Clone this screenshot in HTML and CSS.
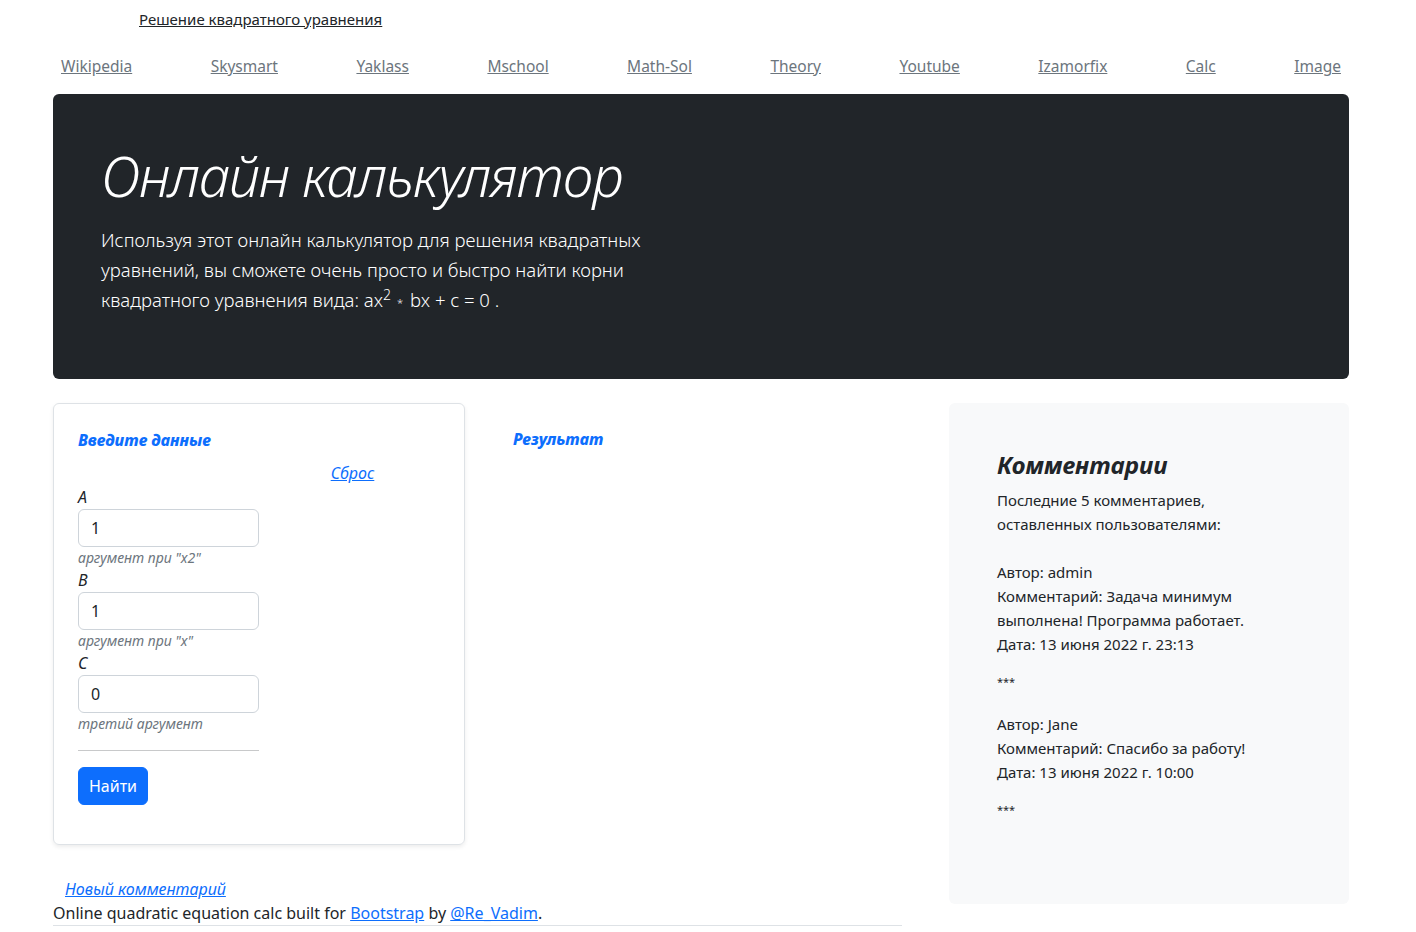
FILE: index.html
```html
<!DOCTYPE html>
<html lang="ru">
<head>
<meta charset="utf-8">
<title>Решение квадратного уравнения</title>
<link rel="stylesheet" href="styles.css">
</head>
<body>
<div class="page">
  <header class="top">
    <a class="brand" href="#">Решение квадратного уравнения</a>
  </header>
  <nav class="links">
    <a href="#">Wikipedia</a>
    <a href="#">Skysmart</a>
    <a href="#">Yaklass</a>
    <a href="#">Mschool</a>
    <a href="#">Math-Sol</a>
    <a href="#">Theory</a>
    <a href="#">Youtube</a>
    <a href="#">Izamorfix</a>
    <a href="#">Calc</a>
    <a href="#">Image</a>
  </nav>
  <section class="hero">
    <h1 class="hero-title">Онлайн калькулятор</h1>
    <p class="hero-lead">Используя этот онлайн калькулятор для решения квадратных уравнений, вы сможете очень просто и быстро найти корни квадратного уравнения вида: ax<sup>2</sup><span class="small-op">*</span>bx + c = 0 .</p>
  </section>
  <div class="main">
    <div class="left">
      <div class="cols">
        <div class="card">
          <h6 class="section-title">Введите данные</h6>
          <div class="reset-row"><span></span><a class="reset" href="#">Сброс</a></div>
          <div class="field">
            <label class="lbl">A</label>
            <div class="input">1</div>
            <div class="help">аргумент при "x2"</div>
          </div>
          <div class="field">
            <label class="lbl">B</label>
            <div class="input">1</div>
            <div class="help">аргумент при "x"</div>
          </div>
          <div class="field">
            <label class="lbl">C</label>
            <div class="input">0</div>
            <div class="help">третий аргумент</div>
          </div>
          <hr class="sep">
          <button class="btn">Найти</button>
        </div>
        <div class="result">
          <h6 class="section-title">Результат</h6>
        </div>
      </div>
      <div class="new-comment"><a href="#">Новый комментарий</a></div>
      <footer class="foot">Online quadratic equation calc built for <a href="#">Bootstrap</a> by <a href="#">@Re_Vadim</a>.</footer>
    </div>
    <aside class="comments">
      <h3 class="comments-title">Комментарии</h3>
      <p class="intro">Последние 5 комментариев, оставленных пользователями:</p>
      <p class="entry">Автор: admin<br>Комментарий: Задача минимум выполнена! Программа работает.<br>Дата: 13 июня 2022 г. 23:13</p>
      <p class="stars">***</p>
      <p class="entry">Автор: Jane<br>Комментарий: Спасибо за работу!<br>Дата: 13 июня 2022 г. 10:00</p>
      <p class="stars">***</p>
    </aside>
  </div>
</div>
</body>
</html>
```
FILE: styles.css
```css
* { box-sizing: border-box; }
html, body { margin: 0; padding: 0; }
body {
  font-family: "Noto Sans", "Open Sans", sans-serif;
  font-size: 16px;
  line-height: 1.5;
  color: #212529;
  background: #fff;
}
.page {
  width: 1296px;
  margin-left: 53px;
}
a { color: #0d6efd; }
.top {
  height: 38px;
  padding-left: 86px;
  padding-top: 7px;
  line-height: 24px;
}
.brand {
  color: #212529;
  font-size: 15px;
}
.links {
  display: flex;
  justify-content: space-between;
  height: 56px;
  padding: 16px 8px 0 8px;
  line-height: 24px;
}
.links a {
  color: #6c757d;
  font-size: 15.5px;
}
.hero {
  background: #212529;
  border-radius: 6px;
  height: 285px;
  padding: 48px;
  color: #fff;
}
.hero-title {
  margin: 0 0 16px 0;
  font-size: 56px;
  font-weight: 300;
  font-style: italic;
  letter-spacing: -1.2px;
  line-height: 1.2;
}
.hero-lead {
  margin: 0;
  max-width: 600px;
  font-size: 18.5px;
  font-weight: 300;
  line-height: 30px;
}
.hero-lead sup { font-size: 14px; line-height: 0; margin-right: 6px; }
.small-op { font-size: 11px; margin-right: 7px; }
.main {
  display: flex;
  align-items: flex-start;
  gap: 47px;
  margin-top: 24px;
}
.left { width: 849px; }
.cols {
  display: grid;
  grid-template-columns: 412px 413px;
  gap: 24px;
}
.card {
  border: 1px solid #dee2e6;
  border-radius: 6px;
  box-shadow: 0 2px 4px rgba(0,0,0,.075);
  padding: 24px;
  height: 442px;
}
.section-title {
  margin: 0;
  color: #0d6efd;
  font-size: 16px;
  font-weight: 800;
  font-style: italic;
  line-height: 24px;
}
.result { padding: 24px; }
.reset-row {
  display: grid;
  grid-template-columns: 184px 181px;
  margin-top: 9px;
}
.reset {
  text-align: center;
  font-style: italic;
}
.field { width: 181px; }
.lbl {
  display: block;
  font-style: italic;
  line-height: 24px;
}
.input {
  height: 38px;
  border: 1px solid #ced4da;
  border-radius: 6px;
  padding: 6px 12px;
  line-height: 24px;
}
.help {
  font-size: 14px;
  line-height: 21px;
  color: #6c757d;
  font-style: italic;
}
.sep {
  width: 181px;
  margin: 16px 0;
  border: 0;
  border-top: 1px solid #c8c9ca;
}
.btn {
  font-family: inherit;
  font-size: 16px;
  line-height: 24px;
  height: 38px;
  width: 70px;
  padding: 6px 0;
  background: #0d6efd;
  color: #fff;
  border: 1px solid #0d6efd;
  border-radius: 6px;
}
.new-comment {
  margin-top: 32px;
  padding-left: 12px;
  font-style: italic;
}
.foot {
  border-bottom: 1px solid #dee2e6;
}
.comments {
  width: 400px;
  background: #f8f9fa;
  border-radius: 6px;
  padding: 48px;
  height: 501px;
}
.comments-title {
  margin: 0 0 8px 0;
  font-size: 24px;
  font-weight: 700;
  font-style: italic;
  line-height: 1.2;
}
.comments p {
  margin: 0 0 24px 0;
  font-size: 15px;
  line-height: 24px;
}
.comments .entry { margin-bottom: 14px; }
.comments .stars {
  font-size: 11px;
  margin-bottom: 18px;
}
```
